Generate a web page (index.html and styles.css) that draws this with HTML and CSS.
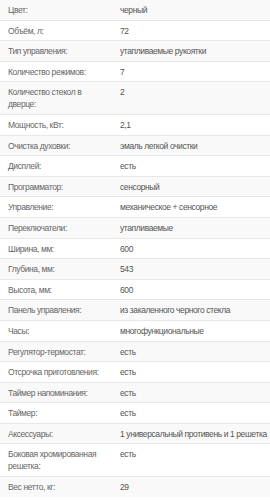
FILE: index.html
```html
<!DOCTYPE html>
<html>
<head>
<meta charset="utf-8">
<link rel="stylesheet" href="styles.css">
</head>
<body>
<table class="specs">
<colgroup><col class="col-label"><col class="col-value"></colgroup>
<tbody>
<tr><td class="label">Цвет:</td><td class="value">черный</td></tr>
<tr><td class="label">Объём, л:</td><td class="value">72</td></tr>
<tr><td class="label">Тип управления:</td><td class="value">утапливаемые рукоятки</td></tr>
<tr><td class="label">Количество режимов:</td><td class="value">7</td></tr>
<tr><td class="label">Количество стекол в дверце:</td><td class="value">2</td></tr>
<tr><td class="label">Мощность, кВт:</td><td class="value">2,1</td></tr>
<tr><td class="label">Очистка духовки:</td><td class="value">эмаль легкой очистки</td></tr>
<tr><td class="label">Дисплей:</td><td class="value">есть</td></tr>
<tr><td class="label">Программатор:</td><td class="value">сенсорный</td></tr>
<tr><td class="label">Управление:</td><td class="value">механическое + сенсорное</td></tr>
<tr><td class="label">Переключатели:</td><td class="value">утапливаемые</td></tr>
<tr><td class="label">Ширина, мм:</td><td class="value">600</td></tr>
<tr><td class="label">Глубина, мм:</td><td class="value">543</td></tr>
<tr><td class="label">Высота, мм:</td><td class="value">600</td></tr>
<tr><td class="label">Панель управления:</td><td class="value">из закаленного черного стекла</td></tr>
<tr><td class="label">Часы:</td><td class="value">многофункциональные</td></tr>
<tr><td class="label">Регулятор-термостат:</td><td class="value">есть</td></tr>
<tr><td class="label">Отсрочка приготовления:</td><td class="value">есть</td></tr>
<tr><td class="label">Таймер напоминания:</td><td class="value">есть</td></tr>
<tr><td class="label">Таймер:</td><td class="value">есть</td></tr>
<tr><td class="label">Аксессуары:</td><td class="value">1 универсальный противень и 1 решетка</td></tr>
<tr><td class="label">Боковая хромированная решетка:</td><td class="value">есть</td></tr>
<tr><td class="label">Вес нетто, кг:</td><td class="value">29</td></tr>
</tbody>
</table>
</body>
</html>
```
FILE: styles.css
```css
html, body {
  margin: 0;
  padding: 0;
  background: #fff;
}
.specs {
  width: 100%;
  table-layout: fixed;
  border-collapse: collapse;
  font-family: "Liberation Sans", Arial, sans-serif;
  font-size: 8.5px;
  letter-spacing: -0.4px;
  line-height: 12px;
  color: #555;
}
.col-label {
  width: 112px;
}
.specs td {
  padding: 4px 8px 3.6px 8px;
  border-top: 1px solid #e8e8e8;
  vertical-align: top;
  text-align: left;
}
.specs .label {
  padding-right: 2px;
  color: #666;
}
.specs tr:first-child td {
  border-top: none;
}
.specs tr:nth-child(odd) td {
  background: #f9f9f9;
}
.specs .value {
  white-space: nowrap;
}
```
